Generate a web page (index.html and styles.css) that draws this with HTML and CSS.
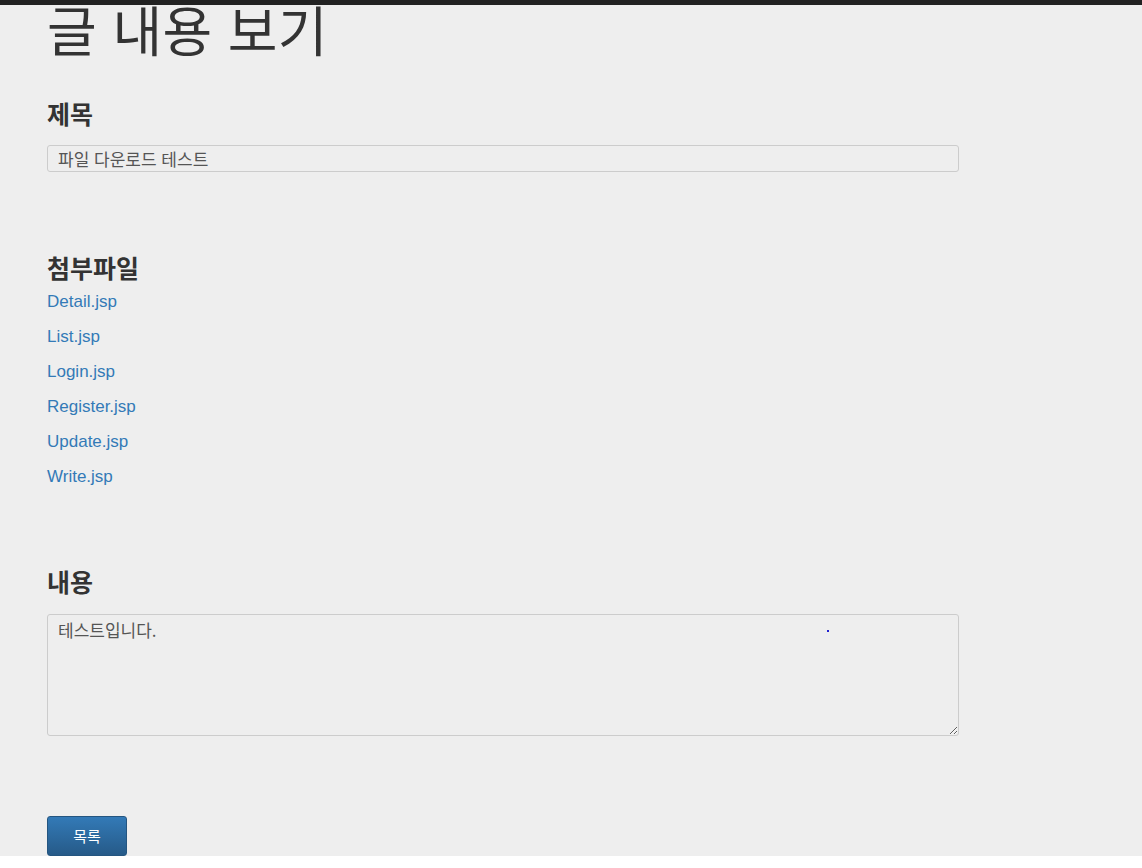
FILE: index.html
```html
<!DOCTYPE html>
<html lang="ko">
<head>
    <meta charset="UTF-8">
    <meta name="viewport" content="width=device-width, initial-scale=1.0">
    <title>글 내용 보기</title>
    <link rel="stylesheet" href="styles.css">
</head>
<body>

    <div class="topbar"></div>

    <div class="page">
        <h1 class="page-title">글 내용 보기</h1>

        <div class="field field-title">
            <h3>제목</h3>
            <input type="text" class="form-control" value="파일 다운로드 테스트" readonly>
        </div>

        <div class="field field-files">
            <h3>첨부파일</h3>
            <ul class="file-list">
                <li><a href="#">Detail.jsp</a></li>
                <li><a href="#">List.jsp</a></li>
                <li><a href="#">Login.jsp</a></li>
                <li><a href="#">Register.jsp</a></li>
                <li><a href="#">Update.jsp</a></li>
                <li><a href="#">Write.jsp</a></li>
            </ul>
        </div>

        <div class="field field-content">
            <h3>내용</h3>
            <div class="content-box">
                <textarea class="form-control" rows="5" readonly>테스트입니다.</textarea>
                <span class="stray-dot"></span>
            </div>
        </div>

        <div class="actions">
            <a href="#" class="btn btn-primary">목록</a>
        </div>
    </div>

</body>
</html>
```

FILE: styles.css
```css
body {
    margin: 0;
    background-color: #ffffff;
    font-family: "Liberation Sans", "Noto Sans CJK KR", sans-serif;
    color: #333333;
}
.topbar {
    height: 5px;
    background-color: #222222;
}
.page {
    height: 851px;
    overflow: hidden;
    background-color: #eeeeee;
    padding: 0 183px 0 47px;
}
h1, h3 {
    font-family: "Noto Sans CJK KR", sans-serif;
    margin: 0;
}
.page-title {
    font-size: 54px;
    font-weight: 400;
    line-height: 48px;
    letter-spacing: 0.3px;
}
h3 {
    font-size: 25px;
    font-weight: 700;
    line-height: 28px;
}
.field-title {
    margin-top: 46px;
}
.form-control {
    display: block;
    box-sizing: border-box;
    width: 100%;
    padding: 0 10px;
    font-family: "Noto Sans CJK KR", sans-serif;
    font-size: 17px;
    color: #555555;
    background-color: #eeeeee;
    border: 1px solid #cccccc;
    border-radius: 3px;
    outline: none;
}
input.form-control {
    height: 27px;
    margin-top: 18px;
}
.field-files {
    margin-top: 81px;
}
.file-list {
    list-style: none;
    margin: 3px 0 0;
    padding: 0;
}
.file-list li {
    font-size: 17px;
    line-height: 35px;
}
.file-list a {
    color: #337ab7;
    text-decoration: none;
}
.field-content {
    margin-top: 73px;
}
.content-box {
    position: relative;
    margin-top: 19px;
}
textarea.form-control {
    height: 122px;
    padding-top: 4px;
    line-height: 22px;
    resize: vertical;
}
.stray-dot {
    position: absolute;
    left: 780px;
    top: 16px;
    width: 2px;
    height: 2px;
    background-color: #2020d0;
}
.actions {
    margin-top: 80px;
}
.btn {
    display: inline-block;
    box-sizing: border-box;
    width: 80px;
    height: 40px;
    line-height: 38px;
    text-align: center;
    font-family: "Noto Sans CJK KR", sans-serif;
    font-size: 15px;
    text-decoration: none;
    border-radius: 3px;
}
.btn-primary {
    color: #ffffff;
    background-image: linear-gradient(to bottom, #337ab7 0, #265a88 100%);
    border: 1px solid #245580;
}
```
